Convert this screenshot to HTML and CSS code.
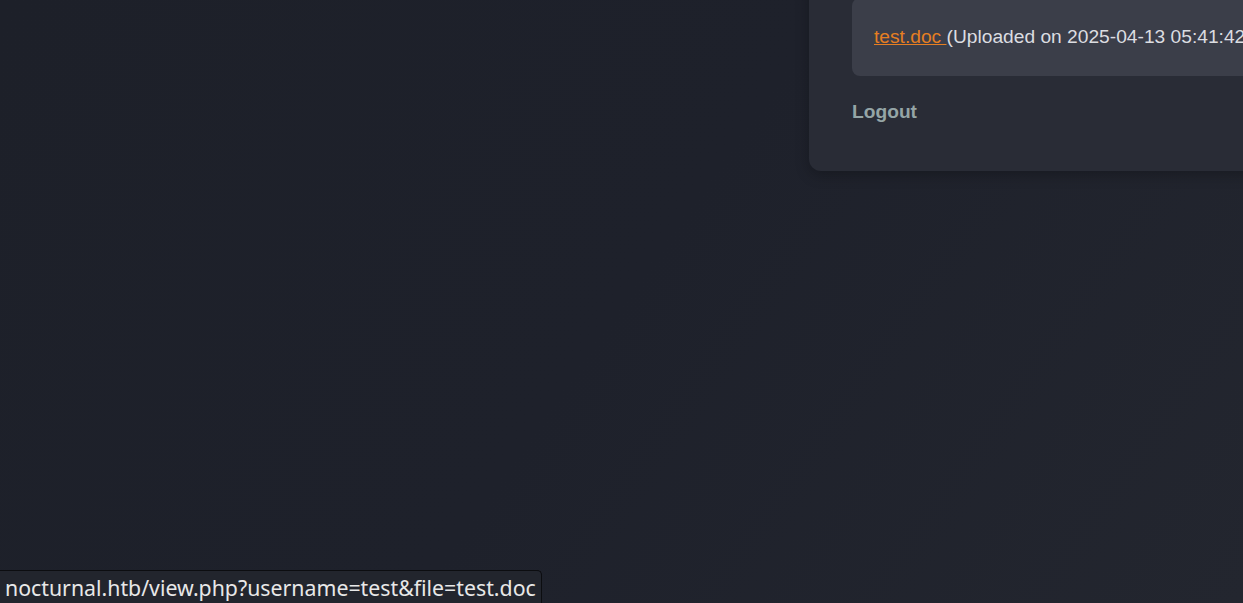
FILE: index.html
```html
<!DOCTYPE html>
<html lang="en">
<head>
<meta charset="utf-8">
<title>Nocturnal - Dashboard</title>
<link rel="stylesheet" href="styles.css">
</head>
<body>
<main class="page">
  <section class="card">
    <ul class="files">
      <li class="file-item"><a class="file-link" href="#">test.doc </a>(Uploaded on 2025-04-13 05:41:42)</li>
    </ul>
    <a class="logout" href="#">Logout</a>
  </section>
</main>
<div class="status">nocturnal.htb/view.php?username=test&amp;file=test.doc</div>
</body>
</html>
```
FILE: styles.css
```css
html, body {
  margin: 0;
  height: 100%;
  overflow: hidden;
}
body {
  background: linear-gradient(125deg, #1d2029 0%, #1e212b 50%, #23262f 100%);
  font-family: "Liberation Sans", Arial, sans-serif;
  color: #dcdde1;
}
.page {
  display: flex;
  padding-left: 809px;
  margin-top: -46px;
}
.card {
  flex: 0 0 640px;
  background: #292c36;
  border-radius: 12px;
  padding: 44px 43px 48px;
  box-shadow: 0 4px 14px rgba(0, 0, 0, 0.25);
}
.files {
  list-style: none;
  margin: 0;
  padding: 0;
}
.file-item {
  background: #3b3e49;
  border-radius: 8px;
  padding: 25px 22px 25px;
  font-size: 19.2px;
  line-height: 28px;
  color: #dcdde1;
  white-space: nowrap;
}
.file-link {
  color: #e67e22;
  text-decoration: underline;
}
.logout {
  display: inline-block;
  margin-top: 25px;
  font-size: 19.2px;
  font-weight: bold;
  color: #95a5a6;
  text-decoration: none;
  line-height: 22px;
}
.status {
  position: fixed;
  left: 0;
  bottom: 0;
  padding: 3px 5px 1px 5px;
  background: #22252d;
  color: #e8e8e8;
  border: 1px solid #0c0d10;
  border-left: none;
  border-bottom: none;
  border-top-right-radius: 5px;
  font-family: "Noto Sans", sans-serif;
  font-size: 21.3px;
  line-height: 28px;
}
```
